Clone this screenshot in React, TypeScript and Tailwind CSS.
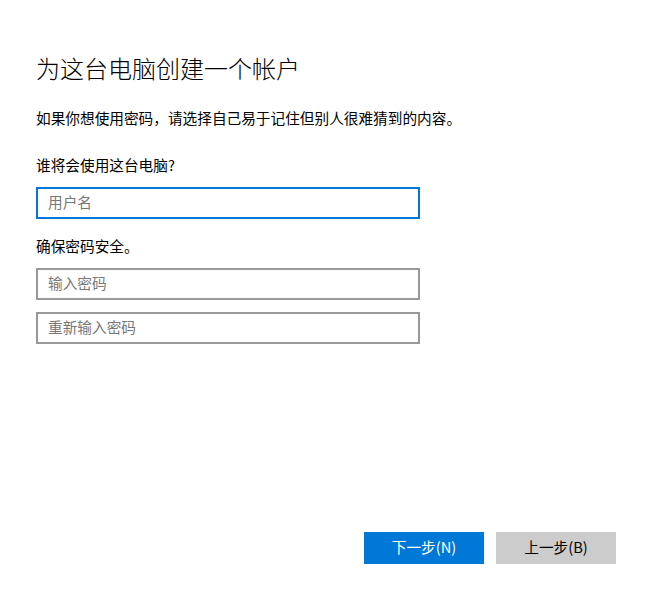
import React from "react";

const font = { fontFamily: '"Noto Sans CJK SC", "Noto Sans", sans-serif' };

function Field({ placeholder, active }: { placeholder: string; active?: boolean }) {
  return (
    <input
      type="text"
      placeholder={placeholder}
      className={
        "h-8 w-[384px] border-2 bg-white px-[10px] pb-[3px] text-[14.67px] text-black outline-none placeholder:text-[#777] " +
        (active ? "border-[#0078d7]" : "border-[#999]")
      }
    />
  );
}

export default function App() {
  return (
    <div className="flex h-[600px] w-[652px] flex-col bg-white px-9 pb-9 text-black" style={font}>
      <h1 className="mt-[50px] text-[24px] font-light leading-9">为这台电脑创建一个帐户</h1>
      <p className="mt-[22px] text-[14.67px] leading-5">如果你想使用密码，请选择自己易于记住但别人很难猜到的内容。</p>
      <p className="mt-[27px] text-[14.67px] leading-5">谁将会使用这台电脑?</p>
      <div className="mt-[12px]">
        <Field placeholder="用户名" active />
      </div>
      <p className="mt-[17px] text-[14.67px] leading-5">确保密码安全。</p>
      <div className="mt-3 flex flex-col gap-3">
        <Field placeholder="输入密码" />
        <Field placeholder="重新输入密码" />
      </div>
      <div className="mt-auto flex justify-end gap-3">
        <button className="h-8 w-[120px] bg-[#0078d7] pb-[2px] text-[14.67px] text-white">下一步(N)</button>
        <button className="h-8 w-[120px] bg-[#cccccc] pb-[2px] text-[14.67px] text-black">上一步(B)</button>
      </div>
    </div>
  );
}
